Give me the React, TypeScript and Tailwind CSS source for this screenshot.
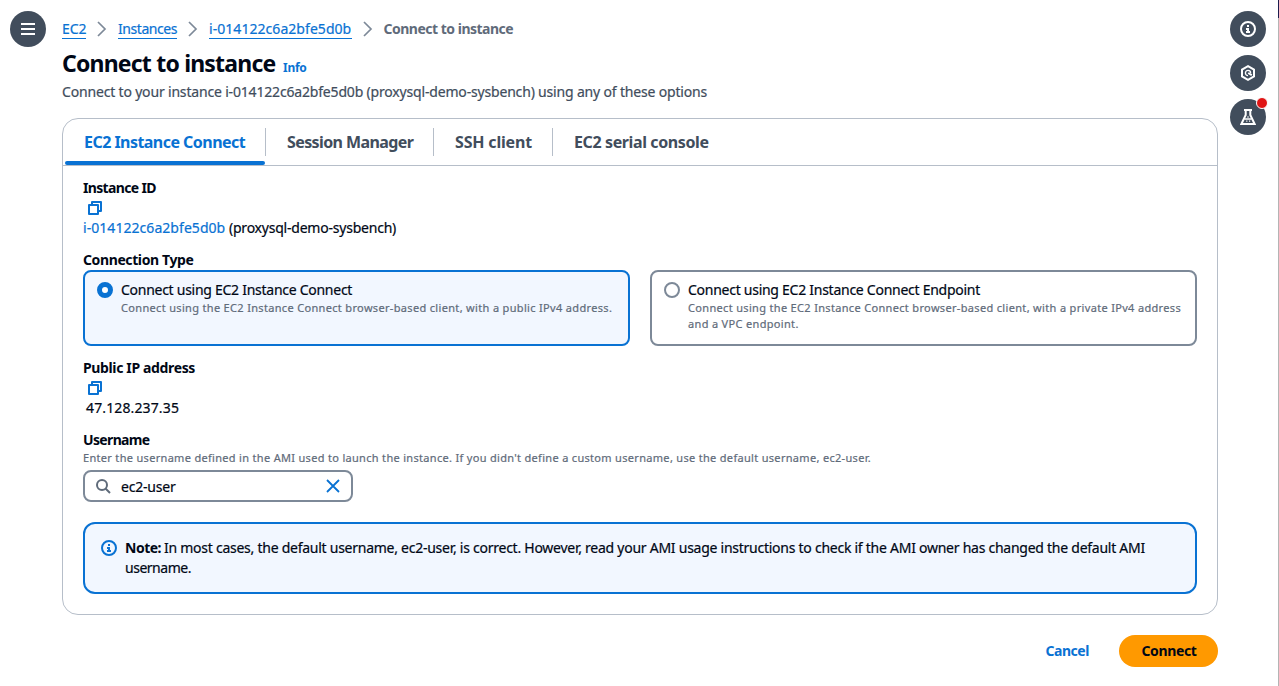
import type { ReactNode } from "react";

function Crumb({ children, className }: { children: ReactNode; className: string }) {
  return (
    <>
      <a className={`h-[20px] border-b border-[#0972d3] leading-[20px] text-[#0972d3] ${className}`}>{children}</a>
      <svg width="16" height="16" viewBox="0 0 16 16" fill="none" stroke="#7d8998" strokeWidth="1.7" className="mx-2 shrink-0">
        <path d="m4 1 7 7-7 7" />
      </svg>
    </>
  );
}

function Circle({ children }: { children: ReactNode }) {
  return (
    <button className="relative flex size-9 shrink-0 items-center justify-center rounded-full bg-[#414d5c] text-white">
      {children}
    </button>
  );
}

function InfoIcon() {
  return (
    <svg width="16" height="16" viewBox="0 0 16 16" fill="none" stroke="currentColor" strokeWidth="2">
      <circle cx="8" cy="8" r="7" />
      <path d="M8 11V8H6M10 11H6M8 6V4" />
    </svg>
  );
}

function CopyIcon() {
  return (
    <svg width="16" height="16" viewBox="0 0 16 16" fill="none" stroke="#0972d3" strokeWidth="2" strokeLinejoin="round" className="my-[2px] ml-1">
      <path d="M2 5h9v9H2z" />
      <path d="M5 5V2h9v9h-3" />
    </svg>
  );
}

function Tab({ label, active, last, className }: { label: string; active?: boolean; last?: boolean; className: string }) {
  return (
    <div className={`flex h-[46px] shrink-0 flex-col ${className}`}>
      <div
        className={`mt-[9px] flex h-7 items-center pb-px pl-[21px] text-[16px] font-bold whitespace-nowrap ${last ? "" : "border-r border-[#b6bec9]"} ${active ? "text-[#0972d3]" : "text-[#414d5c]"}`}
      >
        {label}
      </div>
      {active && <div className="mt-[5px] mr-px ml-[2px] h-1 rounded-[2px] bg-[#0972d3]" />}
    </div>
  );
}

export default function App() {
  return (
    <div className="flex h-[686px] w-[1279px] overflow-hidden bg-white font-['Noto_Sans',sans-serif] text-[14px] leading-[20px] text-[#000716]">
      <div className="w-[62px] shrink-0 pt-[11px] pl-[10px]">
        <Circle>
          <svg width="16" height="16" viewBox="0 0 16 16" stroke="currentColor" strokeWidth="2">
            <path d="M1 3h14M1 8h14M1 13h14" />
          </svg>
        </Circle>
      </div>

      <main className="flex w-[1156px] shrink-0 flex-col [-webkit-text-stroke:0.2px]">
        <nav className="mt-[19px] flex h-[20px] items-center whitespace-nowrap">
          <Crumb className="w-[24px] tracking-[-0.1px]">EC2</Crumb>
          <Crumb className="w-[59px] tracking-[-0.44px]">Instances</Crumb>
          <Crumb className="w-[142.5px] tracking-[0.05px]">i-014122c6a2bfe5d0b</Crumb>
          <span className="font-bold tracking-[-0.5px] text-[#5f6b7a] [-webkit-text-stroke:0]">Connect to instance</span>
        </nav>
        <div className="mt-[9px] flex h-[30px] items-baseline whitespace-nowrap [-webkit-text-stroke:0]">
          <h1 className="w-[221px] text-[23px] leading-[30px] font-bold tracking-[-0.8px]">Connect to instance</h1>
          <a className="text-[12px] font-bold tracking-[-0.27px] text-[#0972d3]">Info</a>
        </div>
        <p className="mt-[4px] tracking-[-0.177px] whitespace-nowrap text-[#414d5c]">
          Connect to your instance i-014122c6a2bfe5d0b (proxysql-demo-sysbench) using any of these options
        </p>

        <section className="mt-[16px] h-[497px] shrink-0 rounded-[16px] border border-[#b6bec9]">
          <div className="flex h-[47px] border-b border-[#b6bec9] [-webkit-text-stroke:0]">
            <Tab label="EC2 Instance Connect" active className="w-[203px] tracking-[-0.54px]" />
            <Tab label="Session Manager" className="w-[168px] tracking-[-0.6px]" />
            <Tab label="SSH client" className="w-[119px] tracking-[-0.18px]" />
            <Tab label="EC2 serial console" last className="tracking-[-0.39px]" />
          </div>

          <div className="flex flex-col px-5 pt-3">
            <h2 className="font-bold tracking-[-0.65px] [-webkit-text-stroke:0]">Instance ID</h2>
            <CopyIcon />
            <div className="flex whitespace-nowrap">
              <a className="w-[146px] tracking-[0.05px] text-[#0972d3]">i-014122c6a2bfe5d0b</a>
              <span className="tracking-[-0.22px]">(proxysql-demo-sysbench)</span>
            </div>

            <h2 className="mt-3 font-bold tracking-[-0.39px] [-webkit-text-stroke:0]">Connection Type</h2>
            <div className="flex gap-5">
              <label className="flex h-[76px] w-[547px] gap-2 rounded-[8px] border-2 border-[#0972d3] bg-[#f2f7ff] px-3 pt-2 whitespace-nowrap">
                <span className="mt-[2px] size-4 shrink-0 rounded-full border-5 border-[#0972d3] bg-white" />
                <span className="flex flex-col">
                  <span className="tracking-[-0.27px]">Connect using EC2 Instance Connect</span>
                  <span className="text-[11px] leading-[16px] tracking-[0.33px] text-[#5f6b7a]">
                    Connect using the EC2 Instance Connect browser-based client, with a public IPv4 address.
                  </span>
                </span>
              </label>
              <label className="flex h-[76px] w-[547px] gap-2 rounded-[8px] border-2 border-[#7d8998] px-3 pt-2 whitespace-nowrap">
                <span className="mt-[2px] size-4 shrink-0 rounded-full border-2 border-[#7d8998] bg-white" />
                <span className="flex flex-col">
                  <span className="tracking-[-0.265px]">Connect using EC2 Instance Connect Endpoint</span>
                  <span className="text-[11px] leading-[16px] tracking-[0.33px] text-[#5f6b7a]">
                    Connect using the EC2 Instance Connect browser-based client, with a private IPv4 address
                    <br />
                    and a VPC endpoint.
                  </span>
                </span>
              </label>
            </div>

            <h2 className="mt-3 font-bold tracking-[-0.36px] [-webkit-text-stroke:0]">Public IP address</h2>
            <CopyIcon />
            <span className="pl-[3px] tracking-[0.13px]">47.128.237.35</span>

            <h2 className="mt-3 font-bold tracking-[-0.65px] [-webkit-text-stroke:0]">Username</h2>
            <p className="text-[11px] leading-[16px] tracking-[0.313px] whitespace-nowrap text-[#5f6b7a]">
              Enter the username defined in the AMI used to launch the instance. If you didn't define a custom username, use the default
              username, ec2-user.
            </p>
            <div className="mt-1 flex h-8 w-[270px] items-center rounded-[8px] border-2 border-[#7d8998] pr-[10px] pl-[10px]">
              <svg width="16" height="16" viewBox="0 0 16 16" fill="none" stroke="#5f6b7a" strokeWidth="2">
                <circle cx="7" cy="7" r="5" />
                <path d="m15 15-4.5-4.5" />
              </svg>
              <span className="ml-[10px] grow pt-[2px] tracking-[-0.2px]">ec2-user</span>
              <svg width="16" height="16" viewBox="0 0 16 16" stroke="#0972d3" strokeWidth="1.8">
                <path d="m2 2 12 12M14 2 2 14" />
              </svg>
            </div>

            <div className="mt-5 flex h-[72px] gap-2 rounded-[12px] border-2 border-[#0972d3] bg-[#f2f7ff] px-4 pt-[14px] whitespace-nowrap">
              <span className="mt-[2px] size-4 shrink-0 text-[#0972d3]">
                <InfoIcon />
              </span>
              <p>
                <b className="inline-block w-[39px] font-bold tracking-[-0.5px] [-webkit-text-stroke:0]">Note:</b>
                <span className="tracking-[-0.256px]">
                  In most cases, the default username, ec2-user, is correct. However, read your AMI usage instructions to check if the AMI
                  owner has changed the default AMI
                </span>
                <br />
                <span className="tracking-[-0.48px]">username.</span>
              </p>
            </div>
          </div>
        </section>

        <footer className="mt-5 flex items-center justify-end gap-[30px] font-bold [-webkit-text-stroke:0]">
          <button className="tracking-[-0.45px] text-[#0972d3]">Cancel</button>
          <button className="h-8 w-[99px] rounded-full bg-[#ff9900] pl-px tracking-[-0.37px]">Connect</button>
        </footer>
      </main>

      <aside className="flex w-[60px] shrink-0 flex-col gap-2 pt-[11px] pl-3">
        <Circle>
          <InfoIcon />
        </Circle>
        <Circle>
          <svg width="16" height="16" viewBox="0 0 16 16" fill="none" stroke="currentColor" strokeWidth="2">
            <path d="M8 1.2 14 4.6v6.8l-6 3.4-6-3.4V4.6z" />
            <path d="M8 10.6A2.6 2.6 0 1 1 10.6 8" strokeWidth="1.3" />
            <path d="m8.2 8 3.6 2.2" strokeWidth="2" />
          </svg>
        </Circle>
        <Circle>
          <svg width="16" height="16" viewBox="0 0 16 16" fill="none" stroke="currentColor" strokeWidth="2">
            <path d="M4 1h8M5.7 1v5L1.4 15h13.2L10.3 6V1" />
            <path d="M4.5 10h7M6.2 12.2h1.2M9 12.2h1.2M7.4 8h1.2" strokeWidth="1.3" />
          </svg>
          <span className="absolute -top-[2px] right-[-2px] size-3 rounded-full border border-white bg-[#e01515]" />
        </Circle>
      </aside>
      <div className="w-px shrink-0 bg-[#b4b4b4]">
        <div className="h-[18px] bg-[#1c1d4e]" />
      </div>
    </div>
  );
}
